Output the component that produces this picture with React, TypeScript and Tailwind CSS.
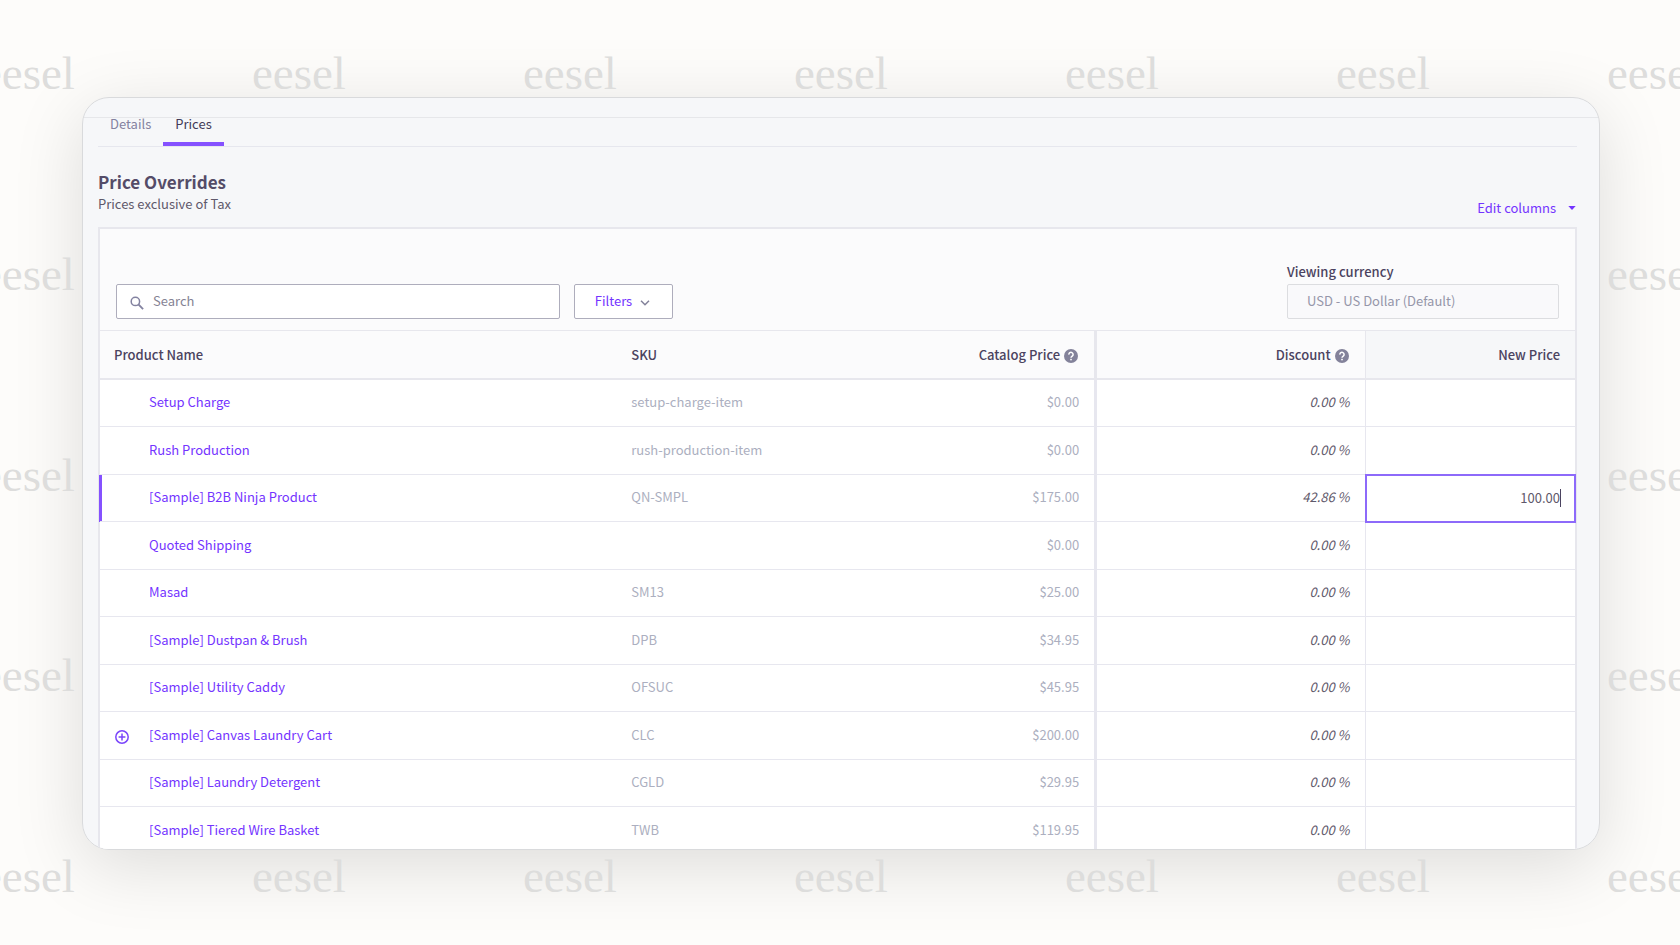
import React from "react";

type Row = {
  name: string;
  sku: string;
  price: string;
  discount: string;
  expandable?: boolean;
  active?: boolean;
};

const rows: Row[] = [
  { name: "Setup Charge", sku: "setup-charge-item", price: "$0.00", discount: "0.00 %" },
  { name: "Rush Production", sku: "rush-production-item", price: "$0.00", discount: "0.00 %" },
  { name: "[Sample] B2B Ninja Product", sku: "QN-SMPL", price: "$175.00", discount: "42.86 %", active: true },
  { name: "Quoted Shipping", sku: "", price: "$0.00", discount: "0.00 %" },
  { name: "Masad", sku: "SM13", price: "$25.00", discount: "0.00 %" },
  { name: "[Sample] Dustpan & Brush", sku: "DPB", price: "$34.95", discount: "0.00 %" },
  { name: "[Sample] Utility Caddy", sku: "OFSUC", price: "$45.95", discount: "0.00 %" },
  { name: "[Sample] Canvas Laundry Cart", sku: "CLC", price: "$200.00", discount: "0.00 %", expandable: true },
  { name: "[Sample] Laundry Detergent", sku: "CGLD", price: "$29.95", discount: "0.00 %" },
  { name: "[Sample] Tiered Wire Basket", sku: "TWB", price: "$119.95", discount: "0.00 %" },
];

const columns = [0, 1, 2, 3, 4, 5, 6];

function Watermark() {
  return (
    <div
      aria-hidden="true"
      className="absolute inset-0 flex flex-col justify-between overflow-hidden pt-[45px] pb-[41px] font-['Liberation_Serif',serif] text-[47px] leading-[56px] text-[#dddddc] select-none"
    >
      {[0, 1, 2, 3, 4].map((r) => (
        <div key={r} className="-ml-[19px] flex">
          {columns.map((c) => (
            <span key={c} className="w-[271px] shrink-0">
              {r === 0 || r === 4 || c === 0 || c === 6 ? "eesel" : ""}
            </span>
          ))}
        </div>
      ))}
    </div>
  );
}

function HelpIcon() {
  return (
    <svg viewBox="0 0 14 14" className="mt-[2px] size-[14px]" aria-hidden="true">
      <circle cx="7" cy="7" r="7" fill="#83829a" />
      <path
        d="M4.9 5.6a2.1 2.1 0 1 1 3.3 1.6C7.4 7.8 7 8 7 8.8"
        fill="none"
        stroke="#fff"
        strokeWidth="1.5"
      />
      <rect x="6.2" y="9.8" width="1.6" height="1.5" fill="#fff" />
    </svg>
  );
}

function PlusCircle() {
  return (
    <svg viewBox="0 0 14 14" className="size-[14px]" fill="none" stroke="#7a45fb" strokeWidth="1.5" aria-hidden="true">
      <circle cx="7" cy="7" r="6.2" />
      <path d="M7 3.6v6.8M3.6 7h6.8" />
    </svg>
  );
}

export default function App() {
  return (
    <main className="relative h-screen overflow-hidden bg-[#fdfcfa] pt-[97px] pr-[80px] pb-[95px] pl-[82px] font-['Noto_Sans_CJK_SC','Noto_Sans',sans-serif] text-[13px] leading-5 text-[#5f596b]">
      <div className="absolute inset-0 flex pt-[97px] pr-[80px] pb-[95px] pl-[82px]">
        <div className="flex-1 rounded-[27px] shadow-[0_16px_70px_rgba(0,0,0,0.13)]" />
      </div>
      <Watermark />
      <div className="relative h-full overflow-hidden rounded-[27px] border border-[#d9dadc] bg-[#f6f7f9]">
        <div className="h-5 border-b border-[#e6e7ea]" />
        <div className="pr-[22px] pl-[15px]">
          <nav className="flex h-[29px] items-stretch border-b border-[#e6e7ee]">
            <button type="button" className="flex items-start px-3 leading-3 text-[#8482a0]">
              Details
            </button>
            <button type="button" className="flex items-start border-b-4 border-[#8551ff] px-3 leading-3 text-[#433b58]">
              Prices
            </button>
          </nav>

          <header className="flex items-end justify-between pt-[23px] pb-[9px]">
            <div>
              <h1 className="text-[17px] leading-6 font-bold text-[#544c68]">Price Overrides</h1>
              <p className="pb-1">Prices exclusive of Tax</p>
            </div>
            <button type="button" className="flex items-center gap-3 pr-px text-[#7434ff]">
              Edit columns
              <svg viewBox="0 0 8 4" className="h-1 w-2" aria-hidden="true">
                <path d="M0.3 0h7.4L4 4z" fill="#7434ff" />
              </svg>
            </button>
          </header>

          <section className="border-x-2 border-t-2 border-[#e7e7ed] bg-[#fbfbfc]">
            <div className="flex items-end gap-[14px] px-4 pt-[33px] pb-[11px]">
              <label className="flex h-[35px] w-[444px] items-center gap-[9px] rounded-xs border border-[#aeadbc] bg-white pl-[13px]">
                <svg viewBox="0 0 14 14" className="mt-[2px] size-[14px]" fill="none" stroke="#8382a0" aria-hidden="true">
                  <circle cx="5.4" cy="5.4" r="4.2" strokeWidth="1.5" />
                  <path d="M8.4 8.4l4.7 4.7" strokeWidth="1.9" />
                </svg>
                <span className="sr-only">Search</span>
                <input
                  type="text"
                  placeholder="Search"
                  className="min-w-0 flex-1 bg-transparent pb-[2px] outline-none placeholder:text-[#858394]"
                />
              </label>
              <button
                type="button"
                className="flex h-[35px] w-[99px] items-center justify-center gap-2 rounded-xs border border-[#aeadbc] bg-white pr-[2px] pb-[2px] text-[#7434ff]"
              >
                Filters
                <svg viewBox="0 0 10 6" className="mt-1 h-[6px] w-[10px]" fill="none" stroke="#83829a" strokeWidth="1.5" aria-hidden="true">
                  <path d="M1 0.8l4 4 4-4" />
                </svg>
              </button>
              <div className="ml-auto flex w-[272px] flex-col">
                <label htmlFor="currency" className="pb-[2px] font-medium text-[#4b4360]">
                  Viewing currency
                </label>
                <select
                  id="currency"
                  disabled
                  className="h-[35px] appearance-none rounded-xs border border-[#dcdde0] bg-[#f9f9fb] pb-[2px] pl-[19px] text-[#9596a9] opacity-100"
                >
                  <option>USD - US Dollar (Default)</option>
                </select>
              </div>
            </div>

            <table className="w-full table-fixed border-separate border-spacing-0 bg-white">
              <colgroup>
                <col className="w-[35%]" />
                <col className="w-[15.3%]" />
                <col />
                <col className="w-[18.2%]" />
                <col className="w-[14.2%]" />
              </colgroup>
              <thead>
                <tr className="h-[50px] bg-[#fbfbfc] text-[#4b4360] [&>th]:border-t [&>th]:border-b-2 [&>th]:border-[#e7e7ed] [&>th]:p-0 [&>th]:font-medium">
                  <th scope="col" className="text-left">
                    <span className="pl-[14px]">Product Name</span>
                  </th>
                  <th scope="col" className="text-left">
                    <span className="pl-[15px]">SKU</span>
                  </th>
                  <th scope="col" className="border-r-3">
                    <span className="flex items-center justify-end gap-1 pr-4">
                      Catalog Price <HelpIcon />
                    </span>
                  </th>
                  <th scope="col" className="border-r">
                    <span className="flex items-center justify-end gap-1 pr-4">
                      Discount <HelpIcon />
                    </span>
                  </th>
                  <th scope="col" className="bg-[#f6f7f9] text-right">
                    <span className="pr-[15px]">New Price</span>
                  </th>
                </tr>
              </thead>
              <tbody>
                {rows.map((row) => (
                  <tr
                    key={row.name}
                    className="odd:h-[47px] even:h-12 [&>td]:border-b [&>td]:border-[#e7e7ef] [&>td]:p-0 [&>td]:pb-[2px]"
                  >
                    <td className={row.active ? "relative shadow-[-1px_0_0_#8551ff,inset_2px_0_0_#8551ff]" : ""}>
                      <div className="flex items-center pl-[15px]">
                        <span className="flex w-[34px] pt-1">
                          {row.expandable && (
                            <button type="button" aria-label={`Expand ${row.name}`}>
                              <PlusCircle />
                            </button>
                          )}
                        </span>
                        <a href="#product" className="text-[#7434ff]">
                          {row.name}
                        </a>
                      </div>
                    </td>
                    <td className="text-[#acafc0]">
                      <span className="pl-[15px]">{row.sku}</span>
                    </td>
                    <td className="border-r-3 text-right text-[#acafc0]">
                      <span className="pr-[15px]">{row.price}</span>
                    </td>
                    <td className="border-r text-right italic">
                      <span className="pr-[15px]">{row.discount}</span>
                    </td>
                    <td className={row.active ? "relative outline-2 -outline-offset-1 outline-[#8d6afa]" : ""}>
                      <div className="flex items-center pt-px pr-[14px] pl-3">
                        <input
                          type="text"
                          aria-label={`New price for ${row.name}`}
                          defaultValue={row.active ? "100.00" : ""}
                          className="w-full min-w-0 bg-transparent text-right outline-none"
                        />
                        {row.active && <span className="h-[18px] w-px shrink-0 bg-[#4b4360]" />}
                      </div>
                    </td>
                  </tr>
                ))}
              </tbody>
            </table>
          </section>
        </div>
      </div>
    </main>
  );
}
